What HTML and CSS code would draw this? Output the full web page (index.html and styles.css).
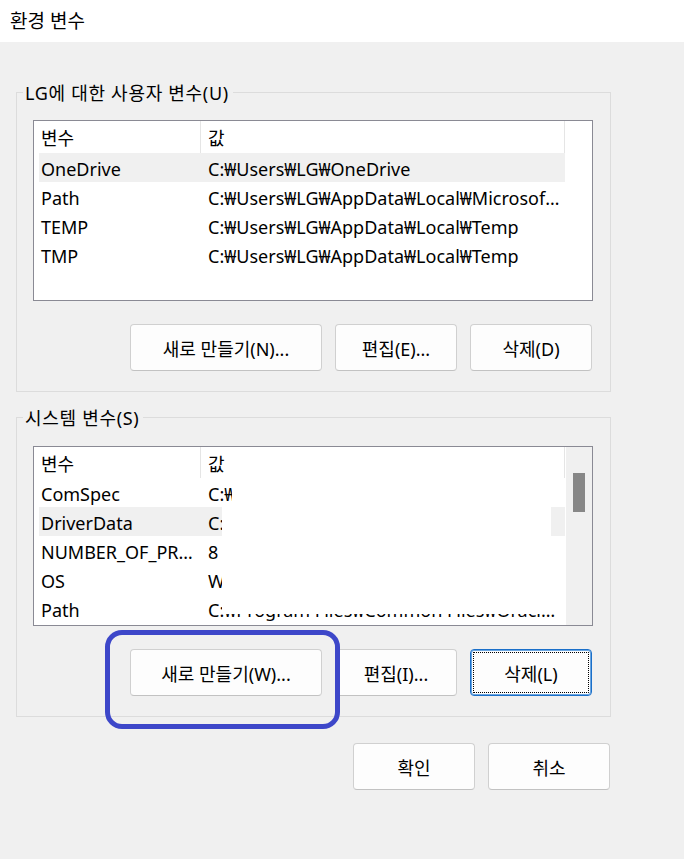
FILE: index.html
```html
<!DOCTYPE html>
<html lang="ko">
<head>
<meta charset="utf-8">
<title>환경 변수</title>
<link rel="stylesheet" href="styles.css">
</head>
<body>
<div class="titlebar">환경 변수</div>
<main class="content">
  <section class="group">
    <span class="legend">LG에 대한 사용자 변수(U)</span>
    <div class="list list-user">
      <div class="list-body">
        <div class="list-head"><span class="h1">변수</span><span class="h2">값</span></div>
        <div class="row sel"><span class="c1">OneDrive</span><span class="c2">C:₩Users₩LG₩OneDrive</span></div>
        <div class="row"><span class="c1">Path</span><span class="c2">C:₩Users₩LG₩AppData₩Local₩Microsoft₩WindowsApps;</span></div>
        <div class="row"><span class="c1">TEMP</span><span class="c2">C:₩Users₩LG₩AppData₩Local₩Temp</span></div>
        <div class="row"><span class="c1">TMP</span><span class="c2">C:₩Users₩LG₩AppData₩Local₩Temp</span></div>
      </div>
    </div>
    <div class="btns">
      <button class="btn wide">새로 만들기(N)...</button>
      <button class="btn">편집(E)...</button>
      <button class="btn">삭제(D)</button>
    </div>
  </section>

  <section class="group group-sys">
    <span class="legend">시스템 변수(S)</span>
    <div class="list list-sys">
      <div class="list-body">
        <div class="list-head head-sys"><span class="h1">변수</span><span class="h2">값</span></div>
        <div class="row"><span class="c1">ComSpec</span><span class="c2">C:₩WINDOWS₩system32₩cmd.exe</span></div>
        <div class="row sel"><span class="c1">DriverData</span><span class="c2 clip">C:₩Windows₩System32₩Drivers₩DriverData</span></div>
        <div class="row"><span class="c1">NUMBER_OF_PROCESSORS</span><span class="c2">8</span></div>
        <div class="row"><span class="c1">OS</span><span class="c2">Windows_NT</span></div>
        <div class="row"><span class="c1">Path</span><span class="c2">C:₩Program Files₩Common Files₩Oracle₩Java₩javapath;C:₩WINDOWS₩system32</span></div>
        <div class="mask mask-a"></div>
        <div class="mask mask-b"></div>
      </div>
      <div class="scrollbar"><div class="thumb"></div></div>
    </div>
    <div class="btns">
      <button class="btn wide">새로 만들기(W)...</button>
      <button class="btn">편집(I)...</button>
      <button class="btn focus">삭제(L)</button>
    </div>
  </section>

  <div class="dialog-btns">
    <button class="btn">확인</button>
    <button class="btn">취소</button>
  </div>
</main>
<div class="annot"></div>
</body>
</html>
```

FILE: styles.css
```css
html, body {
  margin: 0;
  padding: 0;
  background: #f0f0f0;
}

body {
  width: 684px;
  height: 859px;
  overflow: hidden;
  font-family: "Noto Sans", "Noto Sans CJK KR", sans-serif;
  font-size: 18px;
  color: #000;
}

.titlebar {
  height: 42px;
  line-height: 42px;
  padding-left: 10px;
  background: #fff;
  font-size: 19px;
}

.content {
  padding: 50px 0 0 16px;
}

.group {
  position: relative;
  box-sizing: border-box;
  width: 595px;
  border: 1px solid #dcdcdc;
  padding: 27px 17px 20px 16px;
}

.group-sys {
  margin-top: 25px;
  padding-top: 28px;
}

.legend {
  position: absolute;
  left: 6px;
  top: -11px;
  padding: 0 4px 0 2px;
  line-height: 22px;
  letter-spacing: 0.7px;
  background: #f0f0f0;
}

.list {
  display: flex;
  box-sizing: border-box;
  height: 181px;
  border: 1px solid #8a8a94;
  background: #fff;
}

.list-sys {
  height: 180px;
}

.list-body {
  position: relative;
  flex: 1;
  min-width: 0;
  overflow: hidden;
}

.list-head {
  display: flex;
  height: 32px;
}

.head-sys {
  height: 31px;
}

.list-head span {
  box-sizing: border-box;
  padding: 5px 0 0 7px;
  line-height: 24px;
  border-right: 1px solid #e5e5e5;
}

.h1 { width: 167px; }
.h2 { width: 364px; }

.row {
  display: flex;
  box-sizing: border-box;
  width: 526px;
  height: 29px;
  margin-left: 5px;
  padding-top: 5px;
  line-height: 23px;
  white-space: nowrap;
}

.row.sel {
  background: #f0f0f0;
}

.row span {
  box-sizing: border-box;
  overflow: hidden;
  text-overflow: ellipsis;
  white-space: nowrap;
}

.c1 {
  width: 161px;
  padding: 0 3px 0 2px;
}

.c2 {
  width: 365px;
  padding: 0 4px 0 8px;
}

.row span.clip {
  width: 351px;
  padding-right: 0;
  text-overflow: clip;
}

.mask {
  position: absolute;
  background: #fff;
}

.mask-a {
  left: 198px;
  top: 31px;
  width: 319px;
  height: 29px;
}

.mask-b {
  left: 188px;
  top: 60px;
  width: 329px;
  height: 107px;
}

.scrollbar {
  box-sizing: border-box;
  width: 26px;
  padding: 26px 7px 0 7px;
  background: #f0f0f0;
}

.thumb {
  width: 12px;
  height: 39px;
  background: #878787;
}

.btns {
  display: flex;
  justify-content: flex-end;
  gap: 13px;
  margin-top: 23px;
  padding-right: 1px;
}

.btn {
  box-sizing: border-box;
  width: 122px;
  height: 47px;
  padding: 0;
  border: 1px solid #d0d0d0;
  border-bottom-color: #c2c2c2;
  border-radius: 4px;
  background: #fdfdfd;
  font-family: inherit;
  font-size: 18px;
  color: #000;
}

.btn.wide {
  width: 192px;
}

.btn.focus {
  border: 1px solid #1a6fc9;
  box-shadow: inset 0 0 0 1px #6aa5e0;
  outline: 1px dotted #000;
  outline-offset: -4px;
}

.dialog-btns {
  display: flex;
  justify-content: flex-end;
  gap: 13px;
  width: 595px;
  margin-top: 26px;
  padding-right: 1px;
  box-sizing: border-box;
}

.annot {
  position: absolute;
  left: 105px;
  top: 630px;
  width: 235px;
  height: 99px;
  box-sizing: border-box;
  border: 5px solid #3d47c9;
  border-radius: 17px;
}
```
